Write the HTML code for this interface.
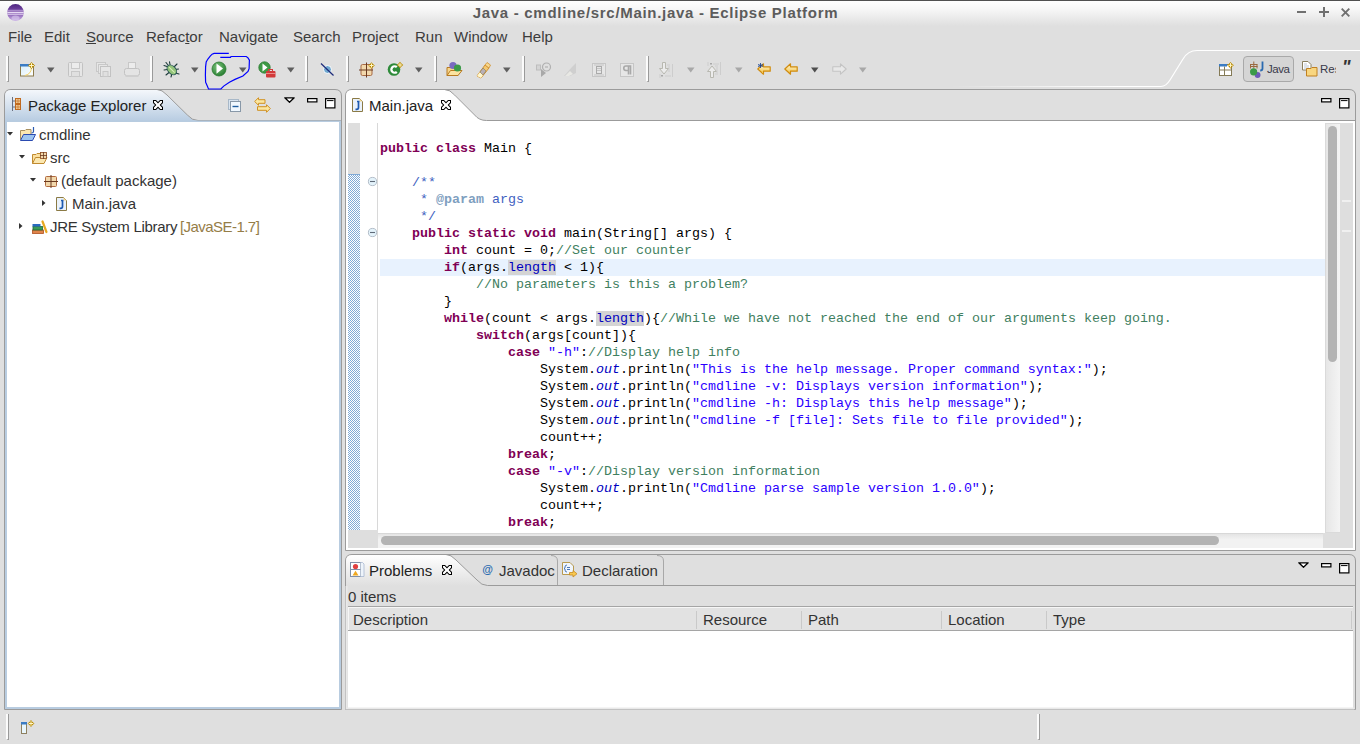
<!DOCTYPE html>
<html><head><meta charset="utf-8">
<style>
*{margin:0;padding:0;box-sizing:border-box}
html,body{width:1360px;height:744px;overflow:hidden;background:#dfdfdf;font-family:"Liberation Sans",sans-serif;color:#3c3c3c;position:relative}
.a{position:absolute}
svg{position:absolute;overflow:visible}
#title{left:0;top:0;width:1360px;height:26px;background:linear-gradient(#fefefe 0,#f6f6f6 35%,#dfdfdf 100%);border-top:1px solid #505050}
#title .t{left:0;width:1311px;top:3px;text-align:center;font-weight:bold;font-size:15px;letter-spacing:0.7px;color:#5c5c5c}
.menu{top:28px;font-size:15px;color:#3c3c3c;white-space:nowrap}
.u{text-decoration:underline}
.code{font-family:"Liberation Mono",monospace;font-size:13.33px;line-height:17px;color:#000}
.ln{height:17px;white-space:pre}
.kw{color:#7f0055;font-weight:bold}
.cm{color:#3f7f5f}
.jd{color:#3f5fbf}
.jt{color:#7f9fbf;font-weight:bold}
.st{color:#2a00ff}
.fi{color:#0000c0}
.it{font-style:italic;color:#0000c0}
.occ{background:#d4d4d4}
.tt{font-size:15px;color:#333;white-space:nowrap}
.sep{width:3px;border-left:2px solid #fbfbfb;border-right:1px solid #9a9a9a;border-bottom:1px solid #9a9a9a;height:26px}
</style></head><body>

<div id="title" class="a"><div class="a t">Java - cmdline/src/Main.java - Eclipse Platform</div></div>
<!-- eclipse logo -->
<svg style="left:7px;top:4px" width="17" height="17" viewBox="0 0 17 17">
 <defs><linearGradient id="eg" x1="0" y1="0" x2="0" y2="1"><stop offset="0" stop-color="#4e2680"/><stop offset="0.45" stop-color="#7a4aa8"/><stop offset="1" stop-color="#c8b0e4"/></linearGradient></defs>
 <ellipse cx="8.5" cy="8.5" rx="8.3" ry="8.4" fill="url(#eg)"/>
 <ellipse cx="8.5" cy="14" rx="4" ry="2.5" fill="#dccbf0" opacity="0.6"/>
 <rect x="0.5" y="5.8" width="16" height="1" fill="#c9b4e4" opacity="0.8"/>
 <rect x="0.2" y="7.7" width="16.6" height="1.2" fill="#f0e8fa"/>
 <rect x="0.4" y="9.6" width="16.2" height="1.1" fill="#e8dcf6"/>
</svg>
<!-- window controls -->
<div class="a" style="left:1297px;top:11px;width:9px;height:2px;background:#707070"></div>
<div class="a" style="left:1319px;top:11px;width:10px;height:2px;background:#707070"></div>
<div class="a" style="left:1323px;top:7px;width:2px;height:10px;background:#707070"></div>
<svg style="left:1341px;top:8px" width="9" height="9"><path d="M0.7 0.7L8.3 8.3M8.3 0.7L0.7 8.3" stroke="#707070" stroke-width="1.9"/></svg>

<!-- Menu -->
<div class="a menu" style="left:8px">File</div>
<div class="a menu" style="left:44px">Edit</div>
<div class="a menu" style="left:86px"><span class="u">S</span>ource</div>
<div class="a menu" style="left:146px">Refac<span class="u">t</span>or</div>
<div class="a menu" style="left:219px">Navigate</div>
<div class="a menu" style="left:293px">Search</div>
<div class="a menu" style="left:352px">Project</div>
<div class="a menu" style="left:415px">Run</div>
<div class="a menu" style="left:454px">Window</div>
<div class="a menu" style="left:522px">Help</div>

<!-- Toolbar separators -->
<div class="a sep" style="left:6px;top:56px"></div>
<div class="a sep" style="left:150px;top:56px"></div>
<div class="a sep" style="left:305px;top:56px"></div>
<div class="a sep" style="left:346px;top:56px"></div>
<div class="a sep" style="left:434px;top:56px"></div>
<div class="a sep" style="left:522px;top:56px"></div>
<div class="a sep" style="left:646px;top:56px"></div>

<!-- perspective bar curve -->
<svg style="left:0;top:0" width="1360" height="100"><defs><linearGradient id="pl" gradientUnits="userSpaceOnUse" x1="950" y1="0" x2="1120" y2="0"><stop offset="0" stop-color="#fff" stop-opacity="0"/><stop offset="1" stop-color="#fff" stop-opacity="1"/></linearGradient></defs><path d="M950 86.5 L1161 86.5 Q1166 86.5 1170 80 L1183 59 Q1188 50.5 1197 50.5 L1360 50.5" fill="none" stroke="url(#pl)" stroke-width="1.2"/></svg>
<div class="a" style="left:1243px;top:56px;width:51px;height:26px;border:1px solid #a9a9a9;border-radius:4px;background:#d5d5d5"></div>
<div class="a tt" style="left:1267px;top:63px;font-size:11.5px;letter-spacing:-0.5px;color:#3a3a4a">Java</div>
<div class="a tt" style="left:1320px;top:63px;font-size:11.5px;color:#3a3a4a;width:16px;overflow:hidden">Res</div>
<div class="a" style="left:1342px;top:57px;font-size:18px;font-weight:bold;font-style:italic;color:#333">"</div>

<!-- ============ Package explorer ============ -->
<svg style="left:0;top:0" width="345" height="712">
 <defs><linearGradient id="tabblue" x1="0" y1="0" x2="0" y2="1"><stop offset="0" stop-color="#f4f7fb"/><stop offset="1" stop-color="#b6cbe1"/></linearGradient></defs>
 <path d="M4.5 709.5 L4.5 96 Q4.5 89.5 11 89.5 L335 89.5 Q341.5 89.5 341.5 96 L341.5 709.5 Z" fill="#dfdfdf" stroke="#9b9b9b" stroke-width="1"/>
 <path d="M5 122 L5 96 Q5 90 11 90 L157 90 Q162 90 167 95 L187.4 115 Q192 120.5 198 120.5 L341 120.5 L341 122 Z" fill="url(#tabblue)"/>
 <path d="M157 89.5 Q162 89.5 167 95 L187.4 115 Q192 120.5 198 120.5 L341 120.5" fill="none" stroke="#9b9b9b" stroke-width="1"/>
 <rect x="5" y="120.5" width="336" height="588.5" fill="#b8cce0"/>
 <rect x="7" y="122" width="332" height="585" fill="#fff"/>
</svg>
<div class="a tt" style="left:28px;top:97px;color:#222">Package Explorer</div>
<svg style="left:153px;top:100px" width="10" height="10" viewBox="0 0 10 10" ><path d="M0 0H3L5 2L7 0H10V3L8 5L10 7V10H7L5 8L3 10H0V7L2 5L0 3Z" fill="#000"/><path d="M1 1H2.6L5 3.4L7.4 1H9V2.6L6.6 5L9 7.4V9H7.4L5 6.6L2.6 9H1V7.4L3.4 5L1 2.6Z" fill="#fff"/></svg>


<!-- tree -->
<div class="a tt" style="left:39px;top:126px">cmdline</div>
<div class="a tt" style="left:50px;top:149px">src</div>
<div class="a tt" style="left:61px;top:172px">(default package)</div>
<div class="a tt" style="left:72px;top:195px">Main.java</div>
<div class="a tt" style="left:50px;top:218px;letter-spacing:-0.3px">JRE System Library</div><div class="a tt" style="left:180px;top:218px;letter-spacing:-0.55px;color:#957d47">[JavaSE-1.7]</div>

<!-- ============ Editor ============ -->
<svg style="left:340px;top:0" width="1020" height="560">
 <path d="M5.5 550.5 L5.5 96 Q5.5 89.5 12 89.5 L1009 89.5 Q1015.5 89.5 1015.5 96 L1015.5 550.5 Z" fill="#dfdfdf" stroke="#9b9b9b" stroke-width="1"/>
 <path d="M6 121 L6 96 Q6 90 12 90 L104.5 90 Q110 90 114.7 95.1 L134.6 115 Q139 120.5 146.5 120.5 L1015 120.5 L1015 121 Z" fill="#fff"/>
 <path d="M104.5 89.5 Q110 89.5 114.7 95.1 L134.6 115 Q139 120.5 146.5 120.5 L1015 120.5" fill="none" stroke="#9b9b9b" stroke-width="1"/>
 <rect x="6" y="121" width="1009" height="429" fill="#fff"/>
</svg>
<div class="a tt" style="left:369px;top:97px;color:#222">Main.java</div>
<svg style="left:441px;top:100px" width="10" height="10" viewBox="0 0 10 10" ><path d="M0 0H3L5 2L7 0H10V3L8 5L10 7V10H7L5 8L3 10H0V7L2 5L0 3Z" fill="#000"/><path d="M1 1H2.6L5 3.4L7.4 1H9V2.6L6.6 5L9 7.4V9H7.4L5 6.6L2.6 9H1V7.4L3.4 5L1 2.6Z" fill="#fff"/></svg>


<!-- rulers -->
<div class="a" style="left:348px;top:123px;width:12px;height:407px;background:#dedede"></div>
<div class="a" style="left:348px;top:174px;width:12px;height:356px;background:conic-gradient(#80aad6 25%,#fff 0 50%,#80aad6 0 75%,#fff 0) 0 0/2px 2px;border-top:1px solid #80aad6"></div>
<div class="a" style="left:377px;top:123px;width:1px;height:407px;background:#d8d8d8"></div>
<div class="a" style="left:348px;top:530px;width:30px;height:18px;background:#dedede"></div>
<!-- current line highlight -->
<div class="a" style="left:380px;top:259px;width:945px;height:17px;background:#e8f2fe"></div>
<!-- fold markers -->
<svg style="left:367px;top:176px" width="11" height="11"><circle cx="5.5" cy="5.5" r="4.1" fill="#e4f3fb" stroke="#aab6c2" stroke-width="0.9"/><path d="M3 5.5H8" stroke="#5f6a78" stroke-width="1.1"/></svg>
<svg style="left:367px;top:227px" width="11" height="11"><circle cx="5.5" cy="5.5" r="4.1" fill="#e4f3fb" stroke="#aab6c2" stroke-width="0.9"/><path d="M3 5.5H8" stroke="#5f6a78" stroke-width="1.1"/></svg>

<div class="a code" style="left:380px;top:140px;width:945px;height:391px;overflow:hidden">
<div class="ln"><span class="kw">public</span> <span class="kw">class</span> Main {</div>
<div class="ln">&nbsp;</div>
<div class="ln">    <span class="jd">/**</span></div>
<div class="ln"><span class="jd">     * </span><span class="jt">@param</span><span class="jd"> args</span></div>
<div class="ln"><span class="jd">     */</span></div>
<div class="ln">    <span class="kw">public</span> <span class="kw">static</span> <span class="kw">void</span> main(String[] args) {</div>
<div class="ln">        <span class="kw">int</span> count = 0;<span class="cm">//Set our counter</span></div>
<div class="ln">        <span class="kw">if</span>(args.<span class="occ fi">length</span> &lt; 1){</div>
<div class="ln">            <span class="cm">//No parameters is this a problem?</span></div>
<div class="ln">        }</div>
<div class="ln">        <span class="kw">while</span>(count &lt; args.<span class="occ fi">length</span>){<span class="cm">//While we have not reached the end of our arguments keep going.</span></div>
<div class="ln">            <span class="kw">switch</span>(args[count]){</div>
<div class="ln">                <span class="kw">case</span> <span class="st">"-h"</span>:<span class="cm">//Display help info</span></div>
<div class="ln">                    System.<span class="it">out</span>.println(<span class="st">"This is the help message. Proper command syntax:"</span>);</div>
<div class="ln">                    System.<span class="it">out</span>.println(<span class="st">"cmdline -v: Displays version information"</span>);</div>
<div class="ln">                    System.<span class="it">out</span>.println(<span class="st">"cmdline -h: Displays this help message"</span>);</div>
<div class="ln">                    System.<span class="it">out</span>.println(<span class="st">"cmdline -f [file]: Sets file to file provided"</span>);</div>
<div class="ln">                    count++;</div>
<div class="ln">                <span class="kw">break</span>;</div>
<div class="ln">                <span class="kw">case</span> <span class="st">"-v"</span>:<span class="cm">//Display version information</span></div>
<div class="ln">                    System.<span class="it">out</span>.println(<span class="st">"Cmdline parse sample version 1.0.0"</span>);</div>
<div class="ln">                    count++;</div>
<div class="ln">                <span class="kw">break</span>;</div>
</div>
<!-- v scrollbar -->
<div class="a" style="left:1325px;top:123px;width:15px;height:410px;background:linear-gradient(90deg,#e6e6e6,#ececec 40%,#f4f4f4);border:1px solid #dadada;border-right:none"></div>
<div class="a" style="left:1328px;top:126px;width:9px;height:236px;background:#b3b3b3;border-radius:5px"></div>
<div class="a" style="left:1340px;top:123px;width:13px;height:410px;background:#dedede"></div>
<div class="a" style="left:1342px;top:200px;width:9px;height:2px;background:#f0f0f0"></div>
<div class="a" style="left:1342px;top:230px;width:9px;height:2px;background:#f0f0f0"></div>
<!-- h scrollbar -->
<div class="a" style="left:378px;top:533px;width:945px;height:15px;background:linear-gradient(#e4e4e4,#f2f2f2 40%,#f2f2f2);border-top:1px solid #d8d8d8"></div>
<div class="a" style="left:381px;top:536px;width:838px;height:9px;background:#b3b3b3;border-radius:5px"></div>
<div class="a" style="left:1323px;top:533px;width:30px;height:15px;background:#dedede"></div>


<!-- ============ Problems ============ -->
<svg style="left:340px;top:500px" width="1020" height="220">
 <defs><linearGradient id="tabw" x1="0" y1="0" x2="0" y2="1"><stop offset="0" stop-color="#ffffff"/><stop offset="1" stop-color="#dfdfdf"/></linearGradient></defs>
 <path d="M5.5 209.5 L5.5 61 Q5.5 54.5 12 54.5 L1009 54.5 Q1015.5 54.5 1015.5 61 L1015.5 209.5 Z" fill="#dfdfdf" stroke="#9b9b9b" stroke-width="1"/>
 <path d="M6 86 L6 61 Q6 55 12 55 L106 55 Q111 55 116 60 L137 80 Q141.5 85.5 147.5 85.5 L147.5 86 Z" fill="url(#tabw)"/>
 <path d="M106 54.5 Q111 54.5 116 60 L137 80 Q141.5 85.5 147.5 85.5 L1015 85.5" fill="none" stroke="#9b9b9b" stroke-width="1"/>
 <path d="M217.5 85 L217.5 61 Q217.5 55.5 211 55.5" fill="none" stroke="#a8a8a8"/>
 <path d="M323.5 85 L323.5 61 Q323.5 55.5 317 55.5" fill="none" stroke="#a8a8a8"/>
 <rect x="6" y="86" width="1009" height="123" fill="#dfdfdf"/>
 <rect x="8" y="106" width="1005" height="25" fill="#e2e2e2"/><path d="M8 106.5H1013M8 130.5H1013" stroke="#a5a5a5"/><path d="M8.5 107V130M8 107.5H1013" stroke="#f6f6f6"/>
 <rect x="8" y="131" width="1005" height="77" fill="#fff"/>
 <path d="M6.5 86 V208.5 H1014.5" fill="none" stroke="#e9e9e9" stroke-width="2"/>
</svg>
<div class="a tt" style="left:369px;top:562px;color:#222">Problems</div>
<svg style="left:442px;top:565px" width="10" height="10" viewBox="0 0 10 10" ><path d="M0 0H3L5 2L7 0H10V3L8 5L10 7V10H7L5 8L3 10H0V7L2 5L0 3Z" fill="#000"/><path d="M1 1H2.6L5 3.4L7.4 1H9V2.6L6.6 5L9 7.4V9H7.4L5 6.6L2.6 9H1V7.4L3.4 5L1 2.6Z" fill="#fff"/></svg>

<div class="a tt" style="left:499px;top:562px">Javadoc</div>
<div class="a tt" style="left:582px;top:562px">Declaration</div>
<div class="a tt" style="left:348px;top:588px">0 items</div>
<div class="a tt" style="left:353px;top:611px">Description</div>
<div class="a tt" style="left:703px;top:611px">Resource</div>
<div class="a tt" style="left:808px;top:611px">Path</div>
<div class="a tt" style="left:948px;top:611px">Location</div>
<div class="a tt" style="left:1053px;top:611px">Type</div>
<div class="a" style="left:696px;top:611px;width:1px;height:18px;background:#c9c9c9"></div>
<div class="a" style="left:801px;top:611px;width:1px;height:18px;background:#c9c9c9"></div>
<div class="a" style="left:941px;top:611px;width:1px;height:18px;background:#c9c9c9"></div>
<div class="a" style="left:1046px;top:611px;width:1px;height:18px;background:#c9c9c9"></div>
<div class="a" style="left:1351px;top:611px;width:1px;height:18px;background:#c9c9c9"></div>

<!-- status bar -->
<div class="a sep" style="left:6px;top:714px"></div>
<div class="a sep" style="left:1037px;top:714px"></div>

<!-- icons -->
<svg style="left:19px;top:60px" width="17" height="17" viewBox="0 0 17 17" ><defs><linearGradient id="nw" x1="0" y1="0" x2="1" y2="1"><stop offset="0" stop-color="#d7eefa"/><stop offset="1" stop-color="#ffffff"/></linearGradient></defs><rect x="1.5" y="4.5" width="13" height="11.5" fill="url(#nw)" stroke="#8e7c4c"/><rect x="1" y="4" width="9" height="2.5" fill="#3b7cc4"/><path d="M12.5 7 Q12.5 14 6 15.5" fill="none" stroke="#f4d060" stroke-width="1"/><path d="M12.5 1.9L14.120000000000001 3.88L16.1 5.5L14.120000000000001 7.12L12.5 9.1L10.879999999999999 7.12L8.9 5.5L10.879999999999999 3.88Z" fill="#b88a00"/><path d="M12.5 3.0999999999999996V7.8999999999999995M10.1 5.5H14.900000000000002" stroke="#fff6c8" stroke-width="1"/></svg>
<svg style="left:47px;top:67px" width="8" height="6" viewBox="0 0 8 6" ><path d="M0 0.5H7.5L3.75 5.5Z" fill="#5f5f5f"/></svg>
<svg style="left:68px;top:62px" width="15" height="15" viewBox="0 0 15 15" ><rect x="0.5" y="0.5" width="14" height="14" rx="1" fill="#e6e6e6" stroke="#c2c2c2"/><rect x="3.5" y="0.5" width="8" height="6" fill="#ececec" stroke="#c8c8c8"/><rect x="3.5" y="9.5" width="8" height="5" fill="#e0e0e0" stroke="#c8c8c8"/></svg>
<svg style="left:96px;top:62px" width="15" height="15" viewBox="0 0 15 15" ><rect x="0.5" y="0.5" width="9" height="9" fill="#e6e6e6" stroke="#c8c8c8"/><rect x="2.5" y="2.5" width="9" height="9" fill="#e6e6e6" stroke="#c8c8c8"/><rect x="4.5" y="4.5" width="10" height="10" fill="#e6e6e6" stroke="#c2c2c2"/><rect x="7" y="9.5" width="5" height="5" fill="#e0e0e0" stroke="#c8c8c8"/></svg>
<svg style="left:124px;top:62px" width="16" height="16" viewBox="0 0 16 16" ><rect x="4.5" y="0.5" width="7" height="7" fill="#ececec" stroke="#c8c8c8"/><rect x="0.5" y="6.5" width="15" height="7" rx="2" fill="#e4e4e4" stroke="#c2c2c2"/><rect x="1.5" y="13" width="13" height="2" fill="#cfcfcf"/></svg>
<svg style="left:163px;top:61px" width="17" height="17" viewBox="0 0 17 17" ><g stroke="#1d3a3a" stroke-width="1.1" fill="none" stroke-linecap="round"><path d="M3 1.5L5 4M1 4.5L4 5.5M6.5 0.8L7 3.5M1 9L4.5 8.5M3 14L6 11.5M8 16L9 12.5M15.5 8L12.5 8.5M14 3L11.5 5.5M16 13L12 12"/></g><g transform="rotate(-45 8.5 8.5)"><ellipse cx="8.5" cy="9" rx="3.8" ry="5.6" fill="#93c47a" stroke="#2a5a55" stroke-width="1"/><path d="M8.5 5V13" stroke="#d8f0b8" stroke-width="1"/></g></svg>
<svg style="left:191px;top:67px" width="8" height="6" viewBox="0 0 8 6" ><path d="M0 0.5H7.5L3.75 5.5Z" fill="#5f5f5f"/></svg>
<svg style="left:211px;top:61px" width="16" height="16" viewBox="0 0 16 16" ><defs><radialGradient id="rg" cx="0.4" cy="0.35" r="0.7"><stop offset="0" stop-color="#7cc47a"/><stop offset="1" stop-color="#237a2e"/></radialGradient></defs><circle cx="8" cy="8" r="7" fill="url(#rg)" stroke="#2a7a30" stroke-width="0.8"/><path d="M5.5 2.5L12 7.6L5.5 12.7Z" fill="#fff"/></svg>
<svg style="left:239px;top:67px" width="8" height="6" viewBox="0 0 8 6" ><path d="M0 0.5H7.5L3.75 5.5Z" fill="#5f5f5f"/></svg>
<svg style="left:258px;top:61px" width="18" height="17" viewBox="0 0 18 17" ><circle cx="6.5" cy="6.5" r="5.7" fill="#3f9a45" stroke="#2a7a30" stroke-width="0.8"/><path d="M4.5 2.5L9.5 6.5L4.5 10.5Z" fill="#fff"/><rect x="8" y="10" width="9.5" height="6.5" rx="1" fill="#d23a3a"/><rect x="10.5" y="8.5" width="4" height="2" fill="none" stroke="#d23a3a" stroke-width="1"/><path d="M8 12.5H17.5" stroke="#f0a0a0" stroke-width="0.8"/></svg>
<svg style="left:287px;top:67px" width="8" height="6" viewBox="0 0 8 6" ><path d="M0 0.5H7.5L3.75 5.5Z" fill="#5f5f5f"/></svg>
<svg style="left:320px;top:62px" width="15" height="15" viewBox="0 0 15 15" ><circle cx="7.5" cy="7.5" r="4" fill="#70a8d0" stroke="#fff" stroke-width="1"/><path d="M1 1.5L13.5 13.5" stroke="#1c2a7a" stroke-width="1.2"/></svg>
<svg style="left:359px;top:62px" width="17" height="16" viewBox="0 0 17 16" ><rect x="2" y="2.5" width="11" height="11" rx="1.5" fill="#f2d8ac" stroke="#a86a45" stroke-width="1"/><path d="M7.5 0.5V15.5M0 8H14" stroke="#6a3a20" stroke-width="1"/><path d="M12.5 0.20000000000000018L13.985 2.015L15.8 3.5L13.985 4.984999999999999L12.5 6.8L11.015 4.984999999999999L9.2 3.5L11.015 2.015Z" fill="#b88a00"/><path d="M12.5 1.4000000000000001V5.6M10.399999999999999 3.5H14.600000000000001" stroke="#fff6c8" stroke-width="1"/></svg>
<svg style="left:387px;top:61px" width="17" height="17" viewBox="0 0 17 17" ><circle cx="7" cy="8.5" r="6.3" fill="#2e8b3a"/><path d="M9.8 6.2A3.2 3.2 0 1 0 9.8 10.8" fill="none" stroke="#fff" stroke-width="2.3"/><path d="M13 0.7000000000000002L14.485 2.515L16.3 4L14.485 5.484999999999999L13 7.3L11.515 5.484999999999999L9.7 4L11.515 2.515Z" fill="#b88a00"/><path d="M13 1.9000000000000001V6.1M10.899999999999999 4H15.100000000000001" stroke="#fff6c8" stroke-width="1"/></svg>
<svg style="left:415px;top:67px" width="8" height="6" viewBox="0 0 8 6" ><path d="M0 0.5H7.5L3.75 5.5Z" fill="#5f5f5f"/></svg>
<svg style="left:446px;top:61px" width="18" height="17" viewBox="0 0 18 17" ><path d="M1 6.5H5L6 5H12V14.5H1Z" fill="#f6d58a" stroke="#b87a20"/><path d="M1 14.5L4.5 9.5H16L12 14.5Z" fill="#fbe3a0" stroke="#b87a20"/><circle cx="7" cy="4.5" r="3.6" fill="#7a6ac0"/><circle cx="11.5" cy="7" r="3.6" fill="#3c9a48"/></svg>
<svg style="left:474px;top:61px" width="18" height="17" viewBox="0 0 18 17" ><path d="M3 15L11 4L15 7L7 17Z" fill="#f3c870" stroke="#d09030" stroke-width="1"/><path d="M3 15L6 11L9 14L7 17Z" fill="#fff8d0"/><path d="M6 11L9 7L12 10L9 14Z" fill="#b8b0b8" stroke="#8a7a50" stroke-width="0.6"/><path d="M11 4L13 1.5L16.5 4L15 7Z" fill="#f7d890" stroke="#d09030" stroke-width="0.8"/></svg>
<svg style="left:503px;top:67px" width="8" height="6" viewBox="0 0 8 6" ><path d="M0 0.5H7.5L3.75 5.5Z" fill="#5f5f5f"/></svg>
<svg style="left:536px;top:62px" width="16" height="16" viewBox="0 0 16 16" ><circle cx="10.5" cy="5" r="4" fill="none" stroke="#b0b0b0" stroke-width="1.2"/><path d="M9 5H12" stroke="#b0b0b0" stroke-width="1.2"/><rect x="0.5" y="3" width="4" height="5" fill="#d4d4d4" stroke="#bdbdbd"/><path d="M5 7L10 11L5 15Z" fill="#a8a8a8"/></svg>
<svg style="left:562px;top:62px" width="16" height="15" viewBox="0 0 16 15" ><path d="M2 14L10 5L14 1V11L8 14Z" fill="#cfcfcf"/><path d="M3 14L8 9L11 12L7 14Z" fill="#e8e8e4"/></svg>
<svg style="left:592px;top:63px" width="14" height="14" viewBox="0 0 14 14" ><rect x="0.5" y="0.5" width="13" height="13" fill="#e6e6e6" stroke="#c6c6c6"/><rect x="4.5" y="3.5" width="5" height="7" fill="none" stroke="#aaaaaa"/><path d="M2 2H12M2 12H12M5 5.5H9M5 7.5H9" stroke="#bbbbbb" stroke-width="0.8"/></svg>
<svg style="left:620px;top:63px" width="14" height="14" viewBox="0 0 14 14" ><rect x="0.5" y="0.5" width="13" height="13" fill="#e6e6e6" stroke="#c6c6c6"/><path d="M6 3H10.5V11.5M8.5 3V11.5M6 3A2 2 0 0 0 6 7.5H8" fill="none" stroke="#a8a8a8" stroke-width="1.6"/></svg>
<svg style="left:659px;top:62px" width="15" height="16" viewBox="0 0 15 16" ><path d="M3.5 0.5H6.5V6.5H9.5L5 12L0.5 6.5H3.5Z" fill="#ececec" stroke="#b8b8b0"/><path d="M8 3H11M9 5H11M9 7H11M9 9H11M6 14H12" stroke="#c8c8c8" stroke-width="0.8"/><rect x="2" y="13" width="2" height="1.5" fill="#a8a8a8"/><path d="M13.5 2V15M1 12V16" stroke="#c8c8c8" stroke-width="0.8"/></svg>
<svg style="left:687px;top:67px" width="8" height="6" viewBox="0 0 8 6" ><path d="M0 0.5H7.5L3.75 5.5Z" fill="#a8a8a8"/></svg>
<svg style="left:707px;top:62px" width="15" height="16" viewBox="0 0 15 16" ><path d="M3.5 15.5H6.5V9.5H9.5L5 4L0.5 9.5H3.5Z" fill="#ececec" stroke="#b8b8b0"/><path d="M6 2H12M8 4H11M9 6H11M9 8H11M9 10H11M8 12H11" stroke="#c8c8c8" stroke-width="0.8"/><rect x="3" y="1" width="2" height="1.5" fill="#a8a8a8"/><path d="M13.5 0V13M1 0V4" stroke="#c8c8c8" stroke-width="0.8"/></svg>
<svg style="left:735px;top:67px" width="8" height="6" viewBox="0 0 8 6" ><path d="M0 0.5H7.5L3.75 5.5Z" fill="#a8a8a8"/></svg>
<svg style="left:757px;top:63px" width="14" height="12" viewBox="0 0 14 12" ><defs><linearGradient id="ag" x1="0" y1="0" x2="0" y2="1"><stop offset="0" stop-color="#fff8d8"/><stop offset="1" stop-color="#f2c040"/></linearGradient></defs><path d="M0.8 6L6.5 0.8V3.8H13.2V8.2H6.5V11.2Z" fill="url(#ag)" stroke="#d08c10" stroke-width="1.2" stroke-linejoin="round"/><path d="M3.5 0V5M1 1.5L6 3.5M6 1.5L1 3.5" stroke="#1f4a9a" stroke-width="0.9"/></svg>
<svg style="left:784px;top:63px" width="14" height="12" viewBox="0 0 14 12" ><defs><linearGradient id="ag" x1="0" y1="0" x2="0" y2="1"><stop offset="0" stop-color="#fff8d8"/><stop offset="1" stop-color="#f2c040"/></linearGradient></defs><path d="M0.8 6L6.5 0.8V3.8H13.2V8.2H6.5V11.2Z" fill="url(#ag)" stroke="#d08c10" stroke-width="1.2" stroke-linejoin="round"/></svg>
<svg style="left:811px;top:67px" width="8" height="6" viewBox="0 0 8 6" ><path d="M0 0.5H7.5L3.75 5.5Z" fill="#4e4e4e"/></svg>
<svg style="left:832px;top:63px" width="15" height="12" viewBox="0 0 15 12" ><path d="M14.2 6L8.5 0.8V3.8H0.8V8.2H8.5V11.2Z" fill="#e8e8e8" stroke="#c4c4c4" stroke-width="1.1" stroke-linejoin="round"/></svg>
<svg style="left:859px;top:67px" width="8" height="6" viewBox="0 0 8 6" ><path d="M0 0.5H7.5L3.75 5.5Z" fill="#a8a8a8"/></svg>
<svg style="left:1218px;top:61px" width="16" height="16" viewBox="0 0 16 16" ><rect x="1.5" y="3.5" width="12" height="11" fill="#fff" stroke="#847a56"/><rect x="1" y="3" width="8" height="2.5" fill="#3b7cc4"/><path d="M1.5 9H13.5M6.5 5.5V14.5" stroke="#847a56"/><path d="M12.5 0.8999999999999999L14.03 2.7699999999999996L15.9 4.3L14.03 5.83L12.5 7.699999999999999L10.97 5.83L9.1 4.3L10.97 2.7699999999999996Z" fill="#b88a00"/><path d="M12.5 2.0999999999999996V6.499999999999999M10.299999999999999 4.3H14.700000000000001" stroke="#fff6c8" stroke-width="1"/></svg>
<svg style="left:1249px;top:61px" width="17" height="18" viewBox="0 0 17 18" ><path d="M1 3.5H8.5M4.8 0.5V7.5M1.5 3.5V7.5M8 3.5V7.5M1 5.5H8.5" stroke="#9a6a40" stroke-width="1"/><path d="M13.5 0.5V7.5Q13.5 9.5 11.2 9.5" fill="none" stroke="#2a6ab0" stroke-width="1.8"/><circle cx="8.6" cy="14" r="2.9" fill="#6c5ab8"/><circle cx="4.6" cy="10.8" r="3.6" fill="#3a9a48"/></svg>
<svg style="left:1302px;top:61px" width="16" height="16" viewBox="0 0 16 16" ><path d="M0.5 0.5H6L9 3.5V9H0.5Z" fill="#fff" stroke="#8a8060"/><path d="M2 3H5M2 5H7M2 7H7" stroke="#a0b0c0" stroke-width="0.7"/><path d="M4.5 7.5H9L10 6.5H15V15H4.5Z" fill="#f8d680" stroke="#c08020"/></svg>
<svg style="left:11px;top:97px" width="10" height="14" viewBox="0 0 10 14" ><path d="M1.5 0V14M1.5 4H4M1.5 10H4" stroke="#6a7080" stroke-width="1"/><rect x="4.5" y="1.5" width="5" height="5" fill="#f0c890" stroke="#c06a20" stroke-width="1"/><rect x="4.5" y="7.5" width="5" height="5" fill="#f0c890" stroke="#c06a20" stroke-width="1"/><path d="M7 1.5V6.5M4.5 4H9.5M7 7.5V12.5M4.5 10H9.5" stroke="#c06a20" stroke-width="0.6"/></svg>
<svg style="left:228px;top:99px" width="13" height="13" viewBox="0 0 13 13" ><rect x="0.5" y="0.5" width="10" height="10" fill="#d8e4f0" stroke="#a8b8c8"/><rect x="2.5" y="2.5" width="10" height="10" fill="#f0f8ff" stroke="#8898a8"/><path d="M4.5 7.5H10.5" stroke="#1f5fa0" stroke-width="1.4"/></svg>
<svg style="left:254px;top:97px" width="17" height="17" viewBox="0 0 17 17" ><path d="M0.7 4.5L4.5 0.7V2.7H11V6.3H4.5V8.3Z" fill="#fbe7a0" stroke="#d09020" stroke-width="1" stroke-linejoin="round"/><path d="M16.3 11.5L12.5 7.7V9.7H3.5V13.3H12.5V15.3Z" fill="#fbe7a0" stroke="#d09020" stroke-width="1" stroke-linejoin="round"/></svg>
<svg style="left:284px;top:97px" width="11" height="6" viewBox="0 0 11 6" ><path d="M0.8 0.8H10.2L5.5 5.2Z" fill="#fff" stroke="#000" stroke-width="1.3" stroke-linejoin="round"/></svg>
<svg style="left:307px;top:98px" width="11" height="5" viewBox="0 0 11 5" ><rect x="0.6" y="0.6" width="9.3" height="3.3" fill="#fff" stroke="#000" stroke-width="1.2"/></svg>
<svg style="left:325px;top:98px" width="11" height="11" viewBox="0 0 11 11" ><rect x="0.6" y="0.6" width="9.3" height="9.3" fill="#fff" stroke="#000" stroke-width="1.2"/><path d="M2 2.6H8.5" stroke="#000" stroke-width="1"/></svg>
<svg style="left:1321px;top:98px" width="11" height="5" viewBox="0 0 11 5" ><rect x="0.6" y="0.6" width="9.3" height="3.3" fill="#fff" stroke="#000" stroke-width="1.2"/></svg>
<svg style="left:1339px;top:98px" width="11" height="11" viewBox="0 0 11 11" ><rect x="0.6" y="0.6" width="9.3" height="9.3" fill="#fff" stroke="#000" stroke-width="1.2"/><path d="M2 2.6H8.5" stroke="#000" stroke-width="1"/></svg>
<svg style="left:1298px;top:562px" width="11" height="6" viewBox="0 0 11 6" ><path d="M0.8 0.8H10.2L5.5 5.2Z" fill="#fff" stroke="#000" stroke-width="1.3" stroke-linejoin="round"/></svg>
<svg style="left:1321px;top:563px" width="11" height="5" viewBox="0 0 11 5" ><rect x="0.6" y="0.6" width="9.3" height="3.3" fill="#fff" stroke="#000" stroke-width="1.2"/></svg>
<svg style="left:1339px;top:563px" width="11" height="11" viewBox="0 0 11 11" ><rect x="0.6" y="0.6" width="9.3" height="9.3" fill="#fff" stroke="#000" stroke-width="1.2"/><path d="M2 2.6H8.5" stroke="#000" stroke-width="1"/></svg>
<svg style="left:7px;top:132px" width="6" height="4" viewBox="0 0 6 4" ><path d="M0 0H6L3 3.5Z" fill="#333"/></svg>
<svg style="left:19px;top:155px" width="6" height="4" viewBox="0 0 6 4" ><path d="M0 0H6L3 3.5Z" fill="#333"/></svg>
<svg style="left:30px;top:178px" width="6" height="4" viewBox="0 0 6 4" ><path d="M0 0H6L3 3.5Z" fill="#333"/></svg>
<svg style="left:42px;top:200px" width="4" height="6" viewBox="0 0 4 6" ><path d="M0 0V6L3.5 3Z" fill="#333"/></svg>
<svg style="left:19px;top:223px" width="4" height="6" viewBox="0 0 4 6" ><path d="M0 0V6L3.5 3Z" fill="#333"/></svg>
<svg style="left:20px;top:127px" width="17" height="15" viewBox="0 0 17 15" ><path d="M0.5 3.5H5L6 2.5H11V12.5H0.5Z" fill="#fbe7b0" stroke="#a89060"/><path d="M0.5 13.5L3.5 7.5H15.5L12.5 13.5Z" fill="#9cc4f0" stroke="#2a4ab0" stroke-width="1"/><path d="M13.5 0V4.5Q13.5 6 11.5 6" fill="none" stroke="#2a5ab0" stroke-width="1.2"/></svg>
<svg style="left:32px;top:152px" width="16" height="13" viewBox="0 0 16 13" ><path d="M0.5 2.5H4L5 1.5H10V11.5H0.5Z" fill="#fbe0a0" stroke="#c08a30"/><path d="M0.5 11.5L3.5 5.5H15L12 11.5Z" fill="#fbe7b0" stroke="#c08a30"/><rect x="8.5" y="0.5" width="6" height="6" fill="#f2d8ac" stroke="#8a4a20" stroke-width="0.8"/><path d="M11.5 0V7M8 3.5H15" stroke="#6a3a20" stroke-width="0.8"/></svg>
<svg style="left:44px;top:175px" width="14" height="13" viewBox="0 0 14 13" ><rect x="1.5" y="1.5" width="11" height="10" rx="1" fill="#f2d8ac" stroke="#b06a40"/><path d="M7 0V13M0 6.5H14" stroke="#6a3a20" stroke-width="1"/></svg>
<svg style="left:56px;top:197px" width="11" height="14" viewBox="0 0 11 14" ><path d="M0.5 0.5H7.5L10.5 3.5V13.5H0.5Z" fill="#eaf2fb" stroke="#8b7a45"/><path d="M7.5 0.5V3.5H10.5Z" fill="#f3d890"/><path d="M5 3.5H7.5M6.5 3.5V9.5Q6.5 11.3 4.6 11.3H3.5" fill="none" stroke="#1e5ab0" stroke-width="1.7"/></svg>
<svg style="left:32px;top:221px" width="16" height="13" viewBox="0 0 16 13" ><rect x="0.5" y="9" width="11" height="3.5" fill="#e0844a" stroke="#b05020" stroke-width="0.8"/><rect x="1" y="5.5" width="9.5" height="3.5" fill="#3a9a58" stroke="#1a6a38" stroke-width="0.8"/><rect x="0.5" y="3" width="8" height="2.5" fill="#2a6ac0"/><path d="M10.5 0.5L14.5 11" stroke="#e8a820" stroke-width="2.2" stroke-linecap="round"/></svg>
<svg style="left:352px;top:98px" width="11" height="14" viewBox="0 0 11 14" ><path d="M0.5 0.5H7.5L10.5 3.5V13.5H0.5Z" fill="#eaf2fb" stroke="#8b7a45"/><path d="M7.5 0.5V3.5H10.5Z" fill="#f3d890"/><path d="M5 3.5H7.5M6.5 3.5V9.5Q6.5 11.3 4.6 11.3H3.5" fill="none" stroke="#1e5ab0" stroke-width="1.7"/></svg>
<svg style="left:350px;top:562px" width="15" height="16" viewBox="0 0 15 16" ><rect x="0.5" y="0.5" width="10" height="14" fill="#fff" stroke="#8090a8"/><path d="M10.5 0.5H12.5L14 2V14.5H10.5" fill="#eef4fb" stroke="#a8b8d0" stroke-width="0.8"/><circle cx="5.5" cy="4.5" r="2.6" fill="#e04040"/><path d="M0.5 7.5H10.5" stroke="#8090a8"/><path d="M5.5 8.8L8.5 13.5H2.5Z" fill="#f0a820"/></svg>
<svg style="left:482px;top:563px" width="11" height="12" viewBox="0 0 11 12" ><text x="0.3" y="10.3" font-family="Liberation Sans" font-size="11" font-weight="bold" fill="#2a6cb0">@</text></svg>
<svg style="left:562px;top:562px" width="16" height="16" viewBox="0 0 16 16" ><path d="M0.5 0.5H8L11.5 4V12.5H0.5Z" fill="#f0f6fd" stroke="#b89a50"/><path d="M5 3Q3 3 3 5V6L2 6.5L3 7V8Q3 10 5 10M5 5.5H8M5 7.5H8" fill="none" stroke="#3a6ab0" stroke-width="0.9"/><path d="M7.5 10.5H11V8.5L15 11.8L11 15V13H7.5Z" fill="#f8c850" stroke="#c88a20" stroke-width="0.8"/></svg>
<svg style="left:20px;top:719px" width="16" height="16" viewBox="0 0 16 16" ><rect x="1.5" y="3.5" width="5" height="11" fill="#e8f6fc" stroke="#8e8060"/><rect x="1" y="3" width="6" height="2.5" fill="#3b7cc4"/><path d="M11 1.0L12.575 2.925L14.5 4.5L12.575 6.075L11 8.0L9.425 6.075L7.5 4.5L9.425 2.925Z" fill="#b88a00"/><path d="M11 2.2V6.8M8.7 4.5H13.3" stroke="#fff6c8" stroke-width="1"/></svg>

<svg style="left:0;top:0" width="300" height="100"><path d="M228.8 53.4 L214.1 53.4 L212.1 54.2 L210.2 56.2 L207.9 59 L206.2 61.9 L205.6 66.9 L205.4 74.8 L205.6 82.2 L207.3 86.1 L208.5 89 L220.9 89 L223.7 86.1 L229.4 82.2 L235 79.4 L242.9 76 L248 71.5 L249.1 68.6 L249.4 60.2 L248 57.9 L246.3 56.5 L231 56.5 L230.5 57.3 L220.3 57.3" fill="none" stroke="#0000ff" stroke-width="1.2"/></svg>
</body></html>
